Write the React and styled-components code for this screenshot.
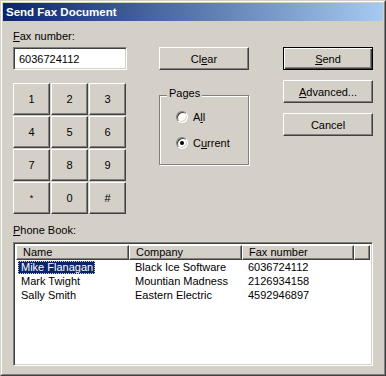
import React, { useState } from "react";
import styled, { createGlobalStyle } from "styled-components";

const Global = createGlobalStyle`
html, body {
  margin: 0;
  padding: 0;
  background: #d4d0c8;
}
body {
  font-family: "Liberation Sans", Arial, sans-serif;
  font-size: 11px;
  color: #000;
}
`

const Window = styled.div`
width: 386px;
height: 376px;
box-sizing: border-box;
border: 1px solid;
border-color: #d4d0c8 #404040 #404040 #d4d0c8;
background: #d4d0c8;
`

const Frame = styled.div`
height: 100%;
box-sizing: border-box;
border: 1px solid;
border-color: #fff #808080 #808080 #fff;
padding: 1px;
display: flex;
flex-direction: column;
`

const TitleBar = styled.div`
height: 18px;
display: flex;
align-items: center;
padding-left: 3px;
background: linear-gradient(to right, #0a246a, #a6caf0);
color: #fff;
font-weight: 700;
font-size: 11.5px;
`

const Body = styled.div`
flex: 1;
padding: 9px 0 7px 10px;
display: flex;
flex-direction: column;
`

const TopRow = styled.div`
display: flex;
align-items: flex-start;
`

const Column = styled.div`
display: flex;
flex-direction: column;
width: ${(p) => p.$width}px;
margin-left: ${(p) => p.$left || 0}px;
padding-top: ${(p) => p.$top || 0}px;
gap: ${(p) => p.$gap || 0}px;
`

const Label = styled.div`
line-height: 13px;
height: 13px;
`

const Key = styled.u`
text-decoration: underline;
text-underline-offset: 1px;
`

const TextInput = styled.input`
margin-top: 4px;
width: 114px;
height: 23px;
box-sizing: border-box;
border: 1px solid;
border-color: #808080 #fff #fff #808080;
box-shadow: inset 1px 1px 0 #404040, inset -1px -1px 0 #d4d0c8;
padding: 0 0 0 5px;
font-family: "Liberation Sans", Arial, sans-serif;
font-size: 11px;
color: #000;
background: #fff;
outline: none;
`

const Keypad = styled.div`
margin-top: 13px;
display: grid;
grid-template-columns: repeat(3, 37px);
grid-auto-rows: 32px;
gap: 1px;
`

const Button = styled.button`
height: ${(p) => p.$height || 23}px;
box-sizing: border-box;
background: #d4d0c8;
border: 1px solid;
border-color: ${(p) => (p.$default ? "#000" : "#fff #404040 #404040 #fff")};
box-shadow: ${(p) =>
    p.$default
      ? "inset 1px 1px 0 #fff, inset -1px -1px 0 #404040, inset -2px -2px 0 #808080"
      : "inset -1px -1px 0 #808080, inset 1px 1px 0 #d4d0c8"};
font-family: "Liberation Sans", Arial, sans-serif;
font-size: ${(p) => p.$size || 11}px;
color: #000;
padding: 0;
display: flex;
align-items: center;
justify-content: center;
cursor: default;
`

const Group = styled.div`
position: relative;
margin-top: 25px;
height: 70px;
box-sizing: border-box;
border: 1px solid #808080;
box-shadow: inset 1px 1px 0 #fff, 1px 1px 0 #fff;
padding: 13px 0 0 16px;
display: flex;
flex-direction: column;
gap: 10px;
`

const Legend = styled.span`
position: absolute;
top: -9px;
left: 7px;
padding: 0 2px;
line-height: 13px;
background: #d4d0c8;
`

const RadioRow = styled.label`
display: flex;
align-items: center;
height: 16px;
gap: 5px;
`

const RadioCircle = styled.span`
width: 12px;
height: 12px;
box-sizing: border-box;
border-radius: 50%;
background: #fff;
border: 1px solid;
border-color: #808080 #fff #fff #808080;
box-shadow: inset 1px 1px 0 #404040, inset -1px -1px 0 #d4d0c8;
display: flex;
align-items: center;
justify-content: center;

&::after {
  content: "";
  width: 4px;
  height: 4px;
  border-radius: 50%;
  background: ${(p) => (p.$checked ? "#000" : "transparent")};
}
`

const BookLabel = styled(Label)`
margin-top: 10px;
`

const ListView = styled.div`
margin-top: 5px;
width: 360px;
flex: 1;
box-sizing: border-box;
border: 1px solid;
border-color: #808080 #fff #fff #808080;
box-shadow: inset 1px 1px 0 #404040, inset -1px -1px 0 #d4d0c8;
background: #fff;
padding: 2px;
display: flex;
flex-direction: column;
`

const HeaderRow = styled.div`
display: flex;
height: 15px;
`

const HeaderCell = styled.div`
width: ${(p) => (p.$width ? `${p.$width}px` : "auto")};
flex: ${(p) => (p.$width ? "none" : 1)};
box-sizing: border-box;
background: #d4d0c8;
border: 1px solid;
border-color: #fff #404040 #404040 #fff;
box-shadow: inset -1px -1px 0 #808080;
padding-left: 6px;
line-height: 13px;
white-space: nowrap;
`

const Row = styled.div`
display: flex;
height: 14px;
align-items: center;
`

const Cell = styled.div`
width: ${(p) => p.$width}px;
padding-left: ${(p) => (p.$first ? 2 : 6)}px;
box-sizing: border-box;
white-space: nowrap;
`

const NameText = styled.span`
display: inline-block;
padding: 0 2px 0 3px;
line-height: 13px;
background: ${(p) => (p.$selected ? "#0a246a" : "transparent")};
color: ${(p) => (p.$selected ? "#fff" : "#000")};
outline: ${(p) => (p.$selected ? "1px dotted #d4d0c8" : "none")};
outline-offset: -1px;
`

const contacts = [
  { name: "Mike Flanagan", company: "Black Ice Software", fax: "6036724112" },
  { name: "Mark Twight", company: "Mountian Madness", fax: "2126934158" },
  { name: "Sally Smith", company: "Eastern Electric", fax: "4592946897" },
];

const keys = ["1", "2", "3", "4", "5", "6", "7", "8", "9", "*", "0", "#"];

const App = () => {
  const [number, setNumber] = useState("6036724112");
  const [pages, setPages] = useState("current");
  const [selected, setSelected] = useState(0);

  return (
    <Window>
      <Global />
      <Frame>
        <TitleBar>Send Fax Document</TitleBar>
        <Body>
          <TopRow>
            <Column $width={114}>
              <Label>
                <Key>F</Key>ax number:
              </Label>
              <TextInput value={number} onChange={(e) => setNumber(e.target.value)} />
              <Keypad>
                {keys.map((k) => (
                  <Button
                    key={k}
                    $height={32}
                    $size={k === "*" ? 9 : 11}
                    onClick={() => setNumber(number + k)}
                  >
                    {k}
                  </Button>
                ))}
              </Keypad>
            </Column>

            <Column $width={90} $left={32} $top={17}>
              <Button onClick={() => setNumber("")}>
                Cl<Key>e</Key>ar
              </Button>
              <Group>
                <Legend>Pages</Legend>
                <RadioRow onClick={() => setPages("all")}>
                  <RadioCircle $checked={pages === "all"} />
                  <span>
                    A<Key>l</Key>l
                  </span>
                </RadioRow>
                <RadioRow onClick={() => setPages("current")}>
                  <RadioCircle $checked={pages === "current"} />
                  <span>
                    C<Key>u</Key>rrent
                  </span>
                </RadioRow>
              </Group>
            </Column>

            <Column $width={90} $left={34} $top={17} $gap={10}>
              <Button $default>
                <Key>S</Key>end
              </Button>
              <Button>
                <Key>A</Key>dvanced...
              </Button>
              <Button>Cancel</Button>
            </Column>
          </TopRow>

          <BookLabel>
            <Key>P</Key>hone Book:
          </BookLabel>
          <ListView>
            <HeaderRow>
              <HeaderCell $width={113}>Name</HeaderCell>
              <HeaderCell $width={113}>Company</HeaderCell>
              <HeaderCell $width={112}>Fax number</HeaderCell>
              <HeaderCell />
            </HeaderRow>
            {contacts.map((c, i) => (
              <Row key={c.name} onClick={() => setSelected(i)}>
                <Cell $width={113} $first>
                  <NameText $selected={selected === i}>{c.name}</NameText>
                </Cell>
                <Cell $width={113}>{c.company}</Cell>
                <Cell $width={112}>{c.fax}</Cell>
              </Row>
            ))}
          </ListView>
        </Body>
      </Frame>
    </Window>
  );
}

export default App;
